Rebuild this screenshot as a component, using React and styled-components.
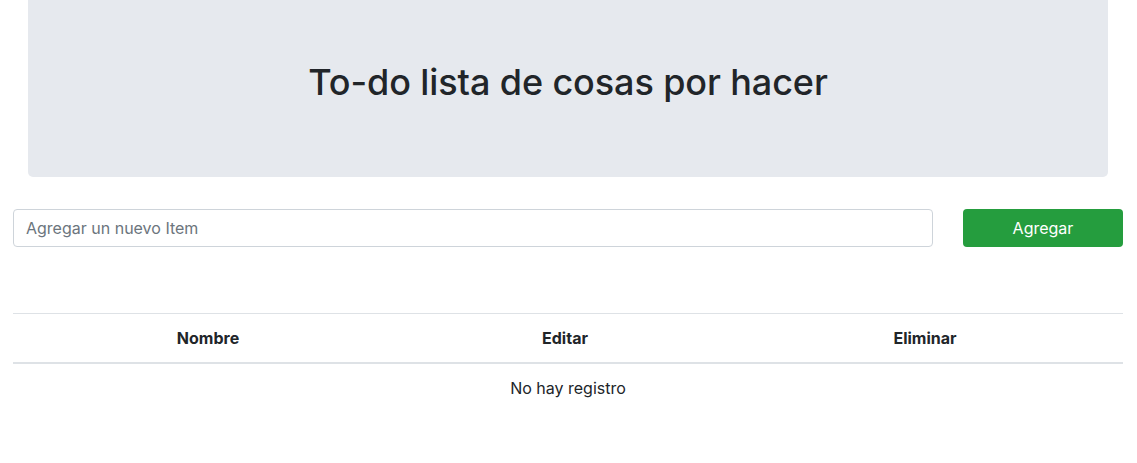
import React, { useState } from 'react';
import styled, { createGlobalStyle } from 'styled-components';

const GlobalStyle = createGlobalStyle`
  body {
    margin: 0;
    background: #fff;
    color: #212529;
    font-family: Inter, "Noto Sans", "Liberation Sans", sans-serif;
    font-size: 16px;
    line-height: 1.5;
  }
  * { box-sizing: border-box; }
`;

const Container = styled.div`
  width: 1137px;
  padding: 0 14px 0 13px;
`;

const Jumbotron = styled.header`
  margin: 0 15px;
  padding: 58px 32px 71px;
  background: #e6e9ee;
  border-radius: 0 0 5px 5px;
  text-align: center;
`;

const Title = styled.h1`
  margin: 0;
  font-size: 36px;
  font-weight: 500;
  line-height: 48px;
  letter-spacing: -0.1px;
  color: #212529;
`;

const FormRow = styled.form`
  display: flex;
  gap: 30px;
  margin-top: 32px;
`;

const Input = styled.input`
  width: 920px;
  height: 38px;
  padding: 6px 12px;
  font-family: inherit;
  font-size: 16px;
  color: #495057;
  border: 1px solid #ced4da;
  border-radius: 4px;
  outline: none;

  &::placeholder {
    color: #6c757d;
  }
`;

const Button = styled.button`
  width: 160px;
  height: 38px;
  font-family: inherit;
  font-size: 16px;
  color: #fff;
  background: #259d3e;
  border: none;
  border-radius: 4px;
  cursor: pointer;
`;

const Table = styled.table`
  width: 100%;
  margin-top: 66px;
  border-collapse: collapse;
  table-layout: fixed;
`;

const Th = styled.th`
  width: ${p => p.$w}px;
  padding: 12px;
  font-weight: 700;
  text-align: center;
  border-top: 1px solid #dee2e6;
  border-bottom: 2px solid #dee2e6;
`;

const Td = styled.td`
  padding: 12px;
  text-align: center;
`;

export default function App() {
  const [item, setItem] = useState('');
  const items = [];

  return (
    <>
      <GlobalStyle />
      <Container>
        <Jumbotron>
          <Title>To-do lista de cosas por hacer</Title>
        </Jumbotron>
        <FormRow onSubmit={e => e.preventDefault()}>
          <Input
            placeholder="Agregar un nuevo Item"
            value={item}
            onChange={e => setItem(e.target.value)}
          />
          <Button type="submit">Agregar</Button>
        </FormRow>
        <Table>
          <thead>
            <tr>
              <Th $w={390}>Nombre</Th>
              <Th $w={324}>Editar</Th>
              <Th $w={396}>Eliminar</Th>
            </tr>
          </thead>
          <tbody>
            {items.length === 0 && (
              <tr>
                <Td colSpan={3}>No hay registro</Td>
              </tr>
            )}
          </tbody>
        </Table>
      </Container>
    </>
  );
}
